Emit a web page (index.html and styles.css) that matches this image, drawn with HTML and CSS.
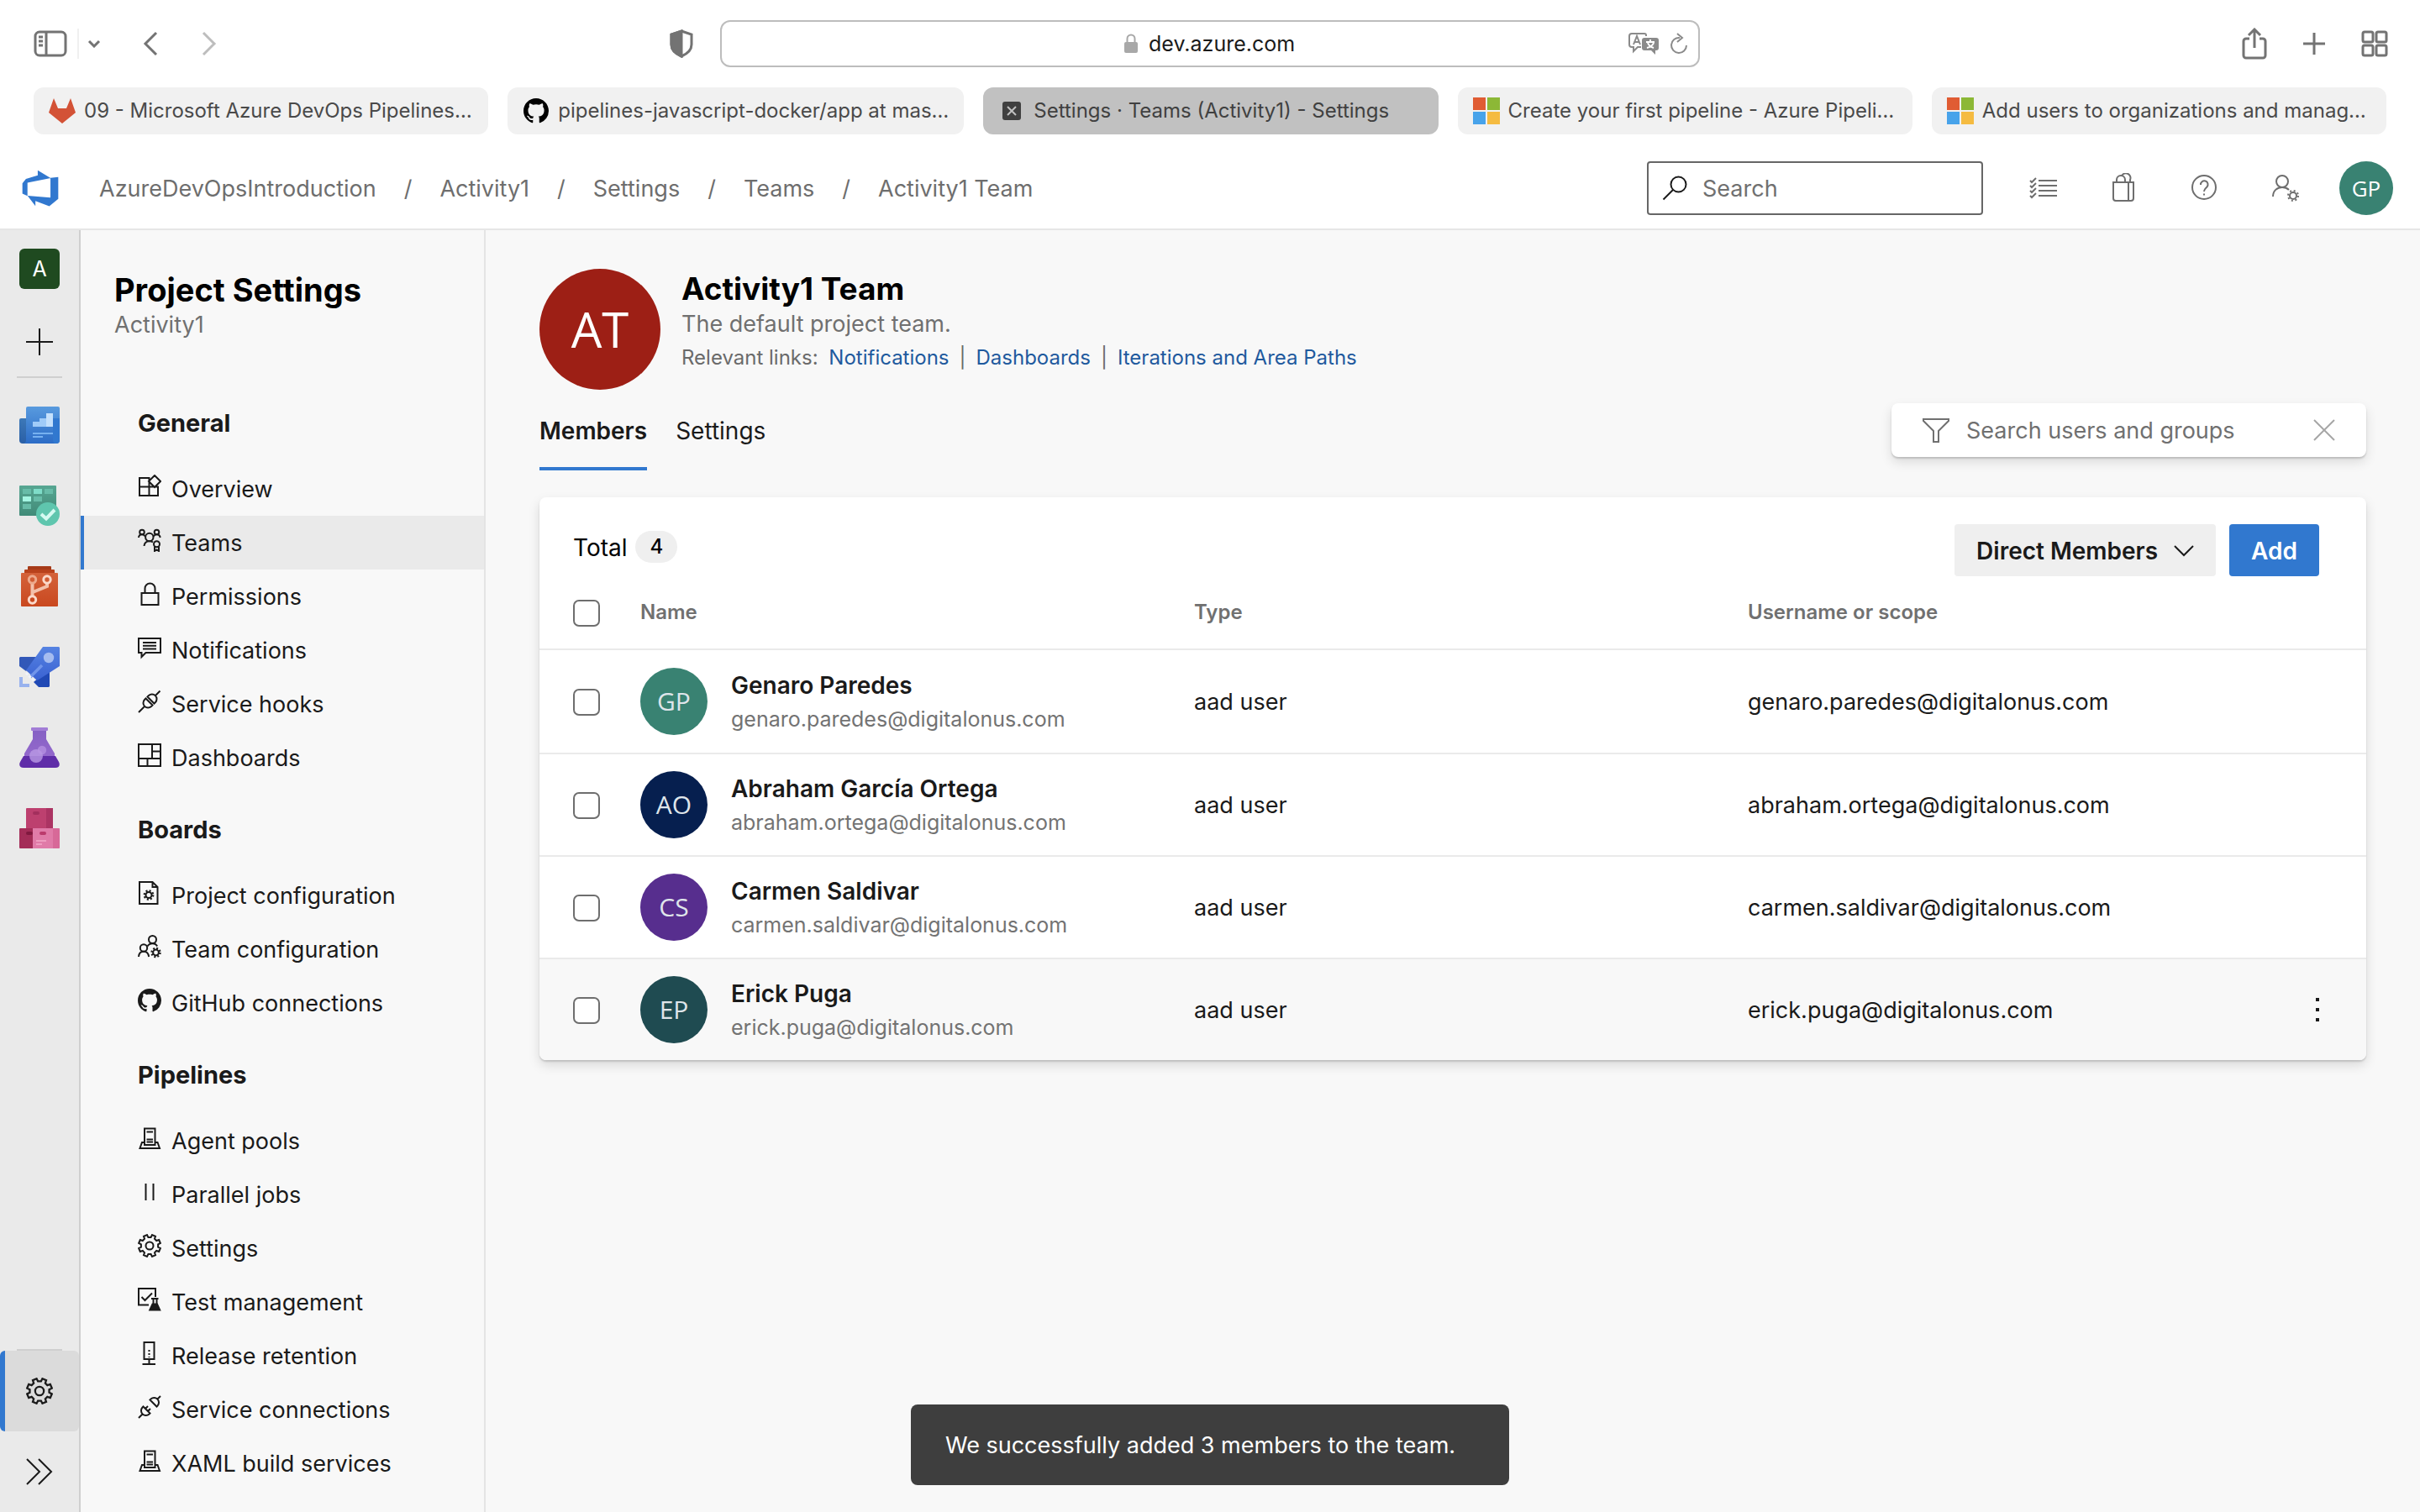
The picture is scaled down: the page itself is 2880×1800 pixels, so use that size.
FILE: index.html
```html
<!DOCTYPE html>
<html lang="en">
<head>
<meta charset="utf-8">
<meta name="viewport" content="width=device-width, initial-scale=1">
<title>Settings · Teams (Activity1) - Settings</title>
<link rel="stylesheet" href="styles.css">
</head>
<body>
<svg class="sprite" aria-hidden="true">
  <symbol id="i-overview" viewBox="0 0 28 28"><path d="M2 4h11.500v21H2zM2 14.500h22V25H13.500M24 14.500V25M20 1l7 7-7 7-7-7z"/></symbol>
  <symbol id="i-teams" viewBox="0 0 28 28"><circle cx="5" cy="4.500" r="2.800"/><circle cx="22.500" cy="4.500" r="2.800"/><circle cx="13.800" cy="10.500" r="4.700"/><path d="M1 11c.2-2.600 2-3.800 4-3.800 1.700 0 3 .8 3.800 2.200M18.700 9.400c.8-1.400 2.100-2.200 3.800-2.200 2 0 3.800 1.200 4.200 3.800M7.500 21c.4-3.700 3-5.800 6.300-5.800 1.800 0 3.200.5 4.200 1.400"/><circle cx="22.500" cy="18.800" r="3.500"/><path d="M20 21.500V27l2.500-1.600L25 27v-5.500"/></symbol>
  <symbol id="i-lock" viewBox="0 0 28 28"><path d="M4.500 13h20v14h-20zM8.500 13V7.500a6 6 0 0 1 12 0V13"/></symbol>
  <symbol id="i-comment" viewBox="0 0 28 28"><path d="M1 3h26v17H9.500L4.500 25v-5H1zM6 8h16M6 11.700h16M6 15.500h16"/></symbol>
  <symbol id="i-plug" viewBox="0 0 28 28"><path d="M1 27l6.500-6.500M26.500 1.500L21 7M9.500 10.500l8 8-1.500 1.500a5.660 5.660 0 0 1-8-8zM11.500 8.500l8 8 1.500-1.500a5.660 5.660 0 0 0-8-8z"/></symbol>
  <symbol id="i-dashboards" viewBox="0 0 28 28"><path d="M1 1h26v26H1zM1 18h26M17 1v17M17 9.500h10M11.500 18v9"/></symbol>
  <symbol id="i-doc-gear" viewBox="0 0 28 28"><path d="M2 1h15.500l6 6v20H2zM17.500 1v6h6"/><circle cx="13" cy="16.500" r="3.500"/><circle cx="13" cy="16.500" r="5.200" stroke-dasharray="2 2.080" stroke-width="2.400"/></symbol>
  <symbol id="i-team-gear" viewBox="0 0 28 28"><circle cx="17.500" cy="5.500" r="4.500"/><circle cx="7" cy="15.500" r="4.200"/><path d="M1 26c.3-4 2.800-6.300 6-6.300s5.600 2 6.200 6.300M11.500 13.500c1.200-2.200 3.500-3.300 6-3.300 2.400 0 4.600 1.100 5.600 3.300"/><circle cx="21.500" cy="21" r="3.400"/><circle cx="21.500" cy="21" r="5" stroke-dasharray="1.930 2" stroke-width="2.400"/></symbol>
  <symbol id="i-github" viewBox="0 0 16 16"><path fill="currentColor" stroke="none" d="M8 0C3.580 0 0 3.580 0 8c0 3.540 2.290 6.530 5.470 7.590.4.070.55-.17.55-.38 0-.19-.01-.82-.01-1.490-2.010.37-2.530-.49-2.690-.94-.09-.23-.48-.94-.82-1.130-.28-.15-.68-.52-.01-.53.63-.01 1.080.58 1.230.82.72 1.210 1.870.87 2.330.66.070-.52.28-.87.51-1.070-1.780-.2-3.640-.89-3.640-3.950 0-.87.31-1.590.82-2.150-.08-.2-.36-1.020.08-2.120 0 0 .67-.21 2.200.82.64-.18 1.320-.27 2-.27.68 0 1.360.09 2 .27 1.530-1.040 2.200-.82 2.200-.82.44 1.100.16 1.920.08 2.120.51.56.82 1.270.82 2.150 0 3.070-1.870 3.750-3.650 3.950.29.25.54.73.54 1.480 0 1.070-.01 1.930-.01 2.200 0 .21.15.46.55.38A8.013 8.013 0 0 0 16 8c0-4.420-3.580-8-8-8z"/></symbol>
  <symbol id="i-server" viewBox="0 0 28 28"><path d="M8 22V2.500h12.500V22zM10.500 6.500h7.500M10.500 15.500h7.500M10.500 18.500h7.500M8 19H5L2.500 26h23.500L23.500 19h-3M8 22h12.500"/></symbol>
  <symbol id="i-parallel" viewBox="0 0 28 28"><path d="M9.500 4v20M18.500 4v20"/></symbol>
  <symbol id="i-gear" viewBox="0 0 28 28"><path d="M24.100 15.600L26.900 17 25.200 21 22.200 20 20 22.200 21 25.200 17 26.900 15.600 24.100H12.400L11 26.900 7 25.200 8 22.200 5.800 20 2.800 21 1.100 17 3.900 15.600V12.400L1.100 11 2.800 7 5.800 8 8 5.800 7 2.800 11 1.100 12.400 3.900H15.600L17 1.100 21 2.800 20 5.800 22.200 8 25.200 7 26.900 11 24.100 12.400z"/><circle cx="14" cy="14" r="4.500"/></symbol>
  <symbol id="i-test" viewBox="0 0 28 28"><path d="M13 20.500H1V1h20v10M4.500 11l4 4L17 6.500M16 13h8.500M18.500 13v6M22.500 13v6"/><path fill="currentColor" d="M17.500 19.500h5.500l3.200 7H14.300z"/></symbol>
  <symbol id="i-retention" viewBox="0 0 28 28"><path d="M7.500 1h12v20h-12zM13.500 21v5.500M5.500 27h15.500"/><path stroke-dasharray="2 2" d="M13.500 10v9"/></symbol>
  <symbol id="i-connect" viewBox="0 0 28 28"><path d="M1 27l4.500-4.500M27 1l-3.500 3.500M6.500 13.500l8 8-1 1a5.660 5.660 0 0 1-8-8zM9 16l3-3M12 19l3-3M14.500 5.500l8 8 1-1a5.660 5.660 0 0 0-8-8z"/></symbol>
  <symbol id="i-search" viewBox="0 0 30 30"><circle cx="19.500" cy="10.500" r="9"/><path d="M13 17L1.500 28.500"/></symbol>
  <symbol id="i-chevron" viewBox="0 0 24 24"><path d="M1 6l11 11L23 6"/></symbol>
  <symbol id="i-ms" viewBox="0 0 32 32"><path fill="#e05c33" stroke="none" d="M0 0h15v15H0z"/><path fill="#8cb836" stroke="none" d="M17 0h15v15H17z"/><path fill="#48a3ea" stroke="none" d="M0 17h15v15H0z"/><path fill="#f5bb41" stroke="none" d="M17 17h15v15H17z"/></symbol>
</svg>

<header class="browser">
  <div class="toolbar">
    <div class="toolbar-left">
      <button class="tool" aria-label="Show sidebar"><svg width="40" height="32" viewBox="0 0 40 32"><rect x="2" y="2" width="36" height="28" rx="5"/><path d="M15 2v28M6 8h5M6 13h5M6 18h5"/></svg></button>
      <button class="tool tool-menu" aria-label="Sidebar menu"><svg width="16" height="10" viewBox="0 0 16 10"><path d="M2 2l6 6 6-6"/></svg></button>
      <button class="tool tool-back" aria-label="Back"><svg width="18" height="30" viewBox="0 0 18 30"><path d="M16 2L3 15l13 13"/></svg></button>
      <button class="tool tool-forward" aria-label="Forward"><svg width="18" height="30" viewBox="0 0 18 30"><path d="M2 2l13 13L2 28"/></svg></button>
      <button class="tool tool-shield" aria-label="Privacy report"><svg width="28" height="34" viewBox="0 0 28 34"><path d="M14 2l12 4v12c0 7-5 11-12 14C7 29 2 25 2 18V6z"/><path fill="currentColor" d="M14 2v30C7 29 2 25 2 18V6z"/></svg></button>
    </div>
    <div class="address">
      <label class="address-field">
        <svg width="18" height="24" viewBox="0 0 18 24"><rect x="1" y="10" width="16" height="13" rx="2" fill="#a8a8a8" stroke="none"/><path stroke="#a8a8a8" stroke-width="2" d="M4.500 10V6a4.500 4.500 0 0 1 9 0v4"/></svg>
        <input class="address-input" aria-label="Address" value="dev.azure.com">
      </label>
      <div class="address-tools">
        <button class="tool" aria-label="Translate"><svg width="38" height="28" viewBox="0 0 38 28"><path stroke-width="2" d="M20 2H5a3 3 0 0 0-3 3v10a3 3 0 0 0 3 3h2v5l5-5h4M7 15l4-10 4 10M8.500 12h5M22 5V4a2 2 0 0 0-2-2"/><path fill="currentColor" stroke="none" d="M20 7h14a3 3 0 0 1 3 3v9a3 3 0 0 1-3 3h-1v5l-5-5h-8a3 3 0 0 1-3-3v-9a3 3 0 0 1 3-3z"/><path stroke="#fff" stroke-width="2" d="M22 12h10M27 9v3M24 13c1 3 4 5 7 6M31 13c-1 3-4 5-8 6"/></svg></button>
        <button class="tool" aria-label="Reload"><svg width="22" height="26" viewBox="0 0 22 26"><path stroke-width="2" d="M12 6a9 9 0 1 0 8 9M9 1l6 5-6 5"/></svg></button>
      </div>
    </div>
    <div class="toolbar-right">
      <button class="tool" aria-label="Share"><svg width="30" height="38" viewBox="0 0 30 38"><path d="M9 13H5a3 3 0 0 0-3 3v17a3 3 0 0 0 3 3h20a3 3 0 0 0 3-3V16a3 3 0 0 0-3-3h-4M15 24V2M8 9l7-7 7 7"/></svg></button>
      <button class="tool" aria-label="New tab"><svg width="28" height="28" viewBox="0 0 28 28"><path d="M14 1v26M1 14h26"/></svg></button>
      <button class="tool" aria-label="Tab overview"><svg width="32" height="32" viewBox="0 0 32 32"><rect x="2" y="2" width="12" height="12" rx="2"/><rect x="18" y="2" width="12" height="12" rx="2"/><rect x="2" y="18" width="12" height="12" rx="2"/><rect x="18" y="18" width="12" height="12" rx="2"/></svg></button>
    </div>
  </div>
  <nav class="tabs" aria-label="Open tabs">
    <a class="tab" href="#"><svg width="32" height="30" viewBox="0 0 32 30"><path fill="#d35236" stroke="none" d="M16 30L0 17 6 0l5 12h10l5-12 6 17z"/></svg><span>09 - Microsoft Azure DevOps Pipelines…</span></a>
    <a class="tab" href="#"><svg class="black" width="32" height="30"><use href="#i-github"/></svg><span>pipelines-javascript-docker/app at mas…</span></a>
    <a class="tab tab-active" href="#" aria-current="page"><svg width="32" height="22" viewBox="0 0 32 22"><rect x="5" width="22" height="22" rx="3" fill="#404040" stroke="none"/><path stroke="#c1c1c1" stroke-width="2" d="M11 6l10 10M21 6L11 16"/></svg><span>Settings · Teams (Activity1) - Settings</span></a>
    <a class="tab" href="#"><svg width="32" height="32"><use href="#i-ms"/></svg><span>Create your first pipeline - Azure Pipeli…</span></a>
    <a class="tab" href="#"><svg width="32" height="32"><use href="#i-ms"/></svg><span>Add users to organizations and manag…</span></a>
  </nav>
</header>

<div class="topbar">
  <a class="logo" href="#" aria-label="Azure DevOps"><svg width="48" height="48" viewBox="0 0 18 18"><path fill="#3178cf" d="M17 4v9.740l-4 3.280-6.200-2.260V17l-3.510-4.590 10.230.8V4.440zm-3.410.49L7.850 1v2.290L2.580 4.840 1 6.870v4.610l2.260 1V6.570z"/></svg></a>
  <nav class="crumbs" aria-label="Breadcrumb">
    <a href="#">AzureDevOpsIntroduction</a><span class="slash">/</span><a href="#">Activity1</a><span class="slash">/</span><a href="#">Settings</a><span class="slash">/</span><a href="#">Teams</a><span class="slash">/</span><a href="#">Activity1 Team</a>
  </nav>
  <label class="search"><svg width="30" height="30"><use href="#i-search"/></svg><input type="search" placeholder="Search" aria-label="Search"></label>
  <div class="top-actions">
    <button class="top-btn" aria-label="Work items"><svg width="36" height="36" viewBox="0 0 36 36"><path stroke-width="2" d="M12 9h22M12 15h22M12 21h22M12 27h22M2 9l2 2 5-5M2 15l2 2 5-5M2 21l2 2 5-5M2 27l2 2 5-5"/></svg></button>
    <button class="top-btn" aria-label="Marketplace"><svg width="36" height="36" viewBox="0 0 36 36"><path stroke-width="2" d="M5 11h24v19a3 3 0 0 1-3 3H8a3 3 0 0 1-3-3zM23 11v22M9 11V8a5 5 0 0 1 10 0v3M15 3.500a5 5 0 0 1 10 4.500v3"/></svg></button>
    <button class="top-btn" aria-label="Help"><svg width="36" height="36" viewBox="0 0 36 36"><circle cx="17" cy="17" r="14" stroke-width="2"/><path stroke-width="2" d="M13 14a4.300 4.300 0 1 1 7.500 2.500C18.500 18.500 17 19 17 22M17 24.500v2"/></svg></button>
    <button class="top-btn" aria-label="User settings"><svg width="36" height="36" viewBox="0 0 36 36"><circle cx="14" cy="10" r="7" stroke-width="2"/><path stroke-width="2" d="M3 28c0-7 5-11 11-11 3 0 6 1 8 3"/><circle cx="27" cy="27" r="4" stroke-width="2"/><circle cx="27" cy="27" r="6" stroke-width="2" stroke-dasharray="2 2.710"/></svg></button>
  </div>
  <button class="avatar avatar-me" aria-label="Account">GP</button>
</div>

<div class="app">
  <nav class="rail" aria-label="Project">
    <a class="rail-item rail-project" href="#"><span class="project-tile">A</span></a>
    <button class="rail-item rail-add" aria-label="New"><svg width="32" height="32" viewBox="0 0 32 32"><path d="M16 0v32M0 16h32"/></svg></button>
    <hr class="rail-line">
    <a class="rail-item" href="#" aria-label="Overview"><svg width="48" height="48" viewBox="0 0 48 48">
      <defs><linearGradient id="g1" x1="0" y1="0" x2="0" y2="1"><stop offset="0" stop-color="#589ade"/><stop offset="1" stop-color="#2c6cc6"/></linearGradient><linearGradient id="g2" x1="0" y1="0" x2="0" y2="1"><stop offset="0" stop-color="#3c78b8"/><stop offset="1" stop-color="#2a5fa6"/></linearGradient></defs>
      <path fill="url(#g2)" d="M2 16h8v30H4a4 4 0 0 1-4-4V18a2 2 0 0 1 2-2z"/><path fill="url(#g1)" d="M10 2h36a2 2 0 0 1 2 2v38a4 4 0 0 1-4 4H4c3 0 4-2 4-4V4a2 2 0 0 1 2-2z"/><path fill="#3178cf" d="M40 16h8v26c0 3-2 4-4 4s-4-1-4-4z"/><path fill="#a0cbf8" d="M16 20h8v-4h8v10H16z"/><path fill="#c4e0fc" d="M32 10h8v16h-8z"/><path fill="#76b1f0" d="M16 33h24v2H16zM16 37h12v2H16z"/></svg></a>
    <a class="rail-item" href="#" aria-label="Boards"><svg width="48" height="48" viewBox="0 0 48 48">
      <defs><linearGradient id="g3" x1="0" y1="0" x2="0" y2="1"><stop offset="0" stop-color="#57a692"/><stop offset="1" stop-color="#418b78"/></linearGradient></defs>
      <rect width="44" height="36" rx="1" fill="url(#g3)"/><path fill="#68bca8" d="M4 4h10v6H4zM30 4h10v6H30zM17 13h10v6H17zM4 22h10v6H4z"/><path fill="#7fdcc8" d="M17 4h10v6H17z"/><path fill="#a5f5e2" d="M4 13h10v6H4z"/><circle cx="34" cy="34" r="14" fill="#5fc6ae"/><path stroke="#d5faf1" stroke-width="4" d="M26 34l6 5.500L42 29"/></svg></a>
    <a class="rail-item" href="#" aria-label="Repos"><svg width="48" height="48" viewBox="0 0 48 48">
      <defs><linearGradient id="g4" x1="0" y1="0" x2="0" y2="1"><stop offset="0" stop-color="#d4623a"/><stop offset="1" stop-color="#c9481f"/></linearGradient></defs>
      <rect x="10" width="28" height="6" rx="1" fill="#a63a18"/><rect x="6" y="4" width="36" height="8" rx="1" fill="#b8421c"/><rect x="2" y="8" width="44" height="40" rx="1" fill="url(#g4)"/><path stroke="#f3c0aa" stroke-width="4" d="M15.500 20v16M33 20v4l-17 7"/><circle cx="15.500" cy="16" r="4.200" stroke="#eda98c"/><circle cx="33" cy="16" r="4.200" stroke="#fbd9ca"/><circle class="ring-filled" cx="15.500" cy="40" r="4.200"/></svg></a>
    <a class="rail-item" href="#" aria-label="Pipelines"><svg width="48" height="48" viewBox="0 0 48 48">
      <defs><linearGradient id="g5" x1="0" y1="0" x2="0" y2="1"><stop offset="0" stop-color="#5683e2"/><stop offset="1" stop-color="#3a62d2"/></linearGradient></defs>
      <path fill="#3258b8" d="M1 12h22L8 29l-8-6V13z"/><path fill="#2049b5" d="M36 26v21l-1 1H23l-6-6z"/><path fill="url(#g5)" d="M28 0h19l1 1v22L23 39l-2 1L8 28z"/><circle cx="35" cy="13" r="6.200" fill="#a5bcf0"/><path stroke="#7195ea" stroke-width="3.500" d="M13 36l14-14"/><path fill="#98b2ee" d="M0 36h4v8h8v4H0z"/><path stroke="#f0f3fa" stroke-width="3" stroke-dasharray="3 2" d="M8 31l10 10"/></svg></a>
    <a class="rail-item" href="#" aria-label="Test Plans"><svg width="48" height="48" viewBox="0 0 48 48">
      <defs><linearGradient id="g6" x1="0" y1="0" x2="0" y2="1"><stop offset="0" stop-color="#8661c4"/><stop offset="1" stop-color="#9368cc"/></linearGradient></defs>
      <path fill="url(#g6)" d="M16 3h16v11l10 17v3H6v-3l10-17z"/><rect x="14" width="20" height="4" rx="1" fill="#a27dd6"/><path fill="#5f2da8" d="M5 34h38l4 7c2 4 0 7-4 7H5c-4 0-6-3-4-7z"/><circle cx="20" cy="34" r="8" fill="#b99ae4" fill-opacity=".8"/><circle cx="27" cy="27" r="5.200" fill="#b996e4" fill-opacity=".7"/></svg></a>
    <a class="rail-item" href="#" aria-label="Artifacts"><svg width="48" height="48" viewBox="0 0 48 48">
      <rect x="8" width="32" height="25" rx="1" fill="#bd406f"/><path fill="#ab3463" d="M32 0h8v24h-8z"/><rect x="16" y="4" width="8" height="4" rx="2" fill="#a32f5d"/><rect y="24" width="17" height="24" rx="1" fill="#a42d58"/><path fill="#e07ba8" d="M16 24h16v24H16z"/><rect x="16" y="24" width="32" height="24" rx="1" fill="#e07ba8"/><path fill="#d76998" d="M32 24h15l1 1v22l-1 1h-7V24z"/><path fill="#e07ba8" d="M30 24h10v24H30z"/><rect x="8" y="28" width="8" height="4" rx="2" fill="#80193f"/><rect x="24" y="28" width="8" height="4" rx="2" fill="#bb3a6c"/><path fill="#ee9dc0" d="M20 38h12v2H20zM20 42h7v2h-7z"/></svg></a>
    <div class="rail-bottom">
      <hr class="rail-line">
      <a class="rail-item rail-selected" href="#" aria-label="Project settings" aria-current="page"><svg width="32" height="32"><use href="#i-gear"/></svg></a>
      <button class="rail-item" aria-label="Expand navigation"><svg width="32" height="32" viewBox="0 0 32 32"><path d="M1 1l15 15L1 31M15 1l15 15-15 15"/></svg></button>
    </div>
  </nav>

  <aside class="sidebar">
    <div class="sidebar-head">
      <h1>Project Settings</h1>
      <p>Activity1</p>
    </div>
    <section>
      <h2>General</h2>
      <a class="nav-link" href="#"><svg><use href="#i-overview"/></svg>Overview</a>
      <a class="nav-link nav-selected" href="#" aria-current="page"><svg><use href="#i-teams"/></svg>Teams</a>
      <a class="nav-link" href="#"><svg><use href="#i-lock"/></svg>Permissions</a>
      <a class="nav-link" href="#"><svg><use href="#i-comment"/></svg>Notifications</a>
      <a class="nav-link" href="#"><svg><use href="#i-plug"/></svg>Service hooks</a>
      <a class="nav-link" href="#"><svg><use href="#i-dashboards"/></svg>Dashboards</a>
    </section>
    <section>
      <h2>Boards</h2>
      <a class="nav-link" href="#"><svg><use href="#i-doc-gear"/></svg>Project configuration</a>
      <a class="nav-link" href="#"><svg><use href="#i-team-gear"/></svg>Team configuration</a>
      <a class="nav-link" href="#"><svg><use href="#i-github"/></svg>GitHub connections</a>
    </section>
    <section>
      <h2>Pipelines</h2>
      <a class="nav-link" href="#"><svg><use href="#i-server"/></svg>Agent pools</a>
      <a class="nav-link" href="#"><svg><use href="#i-parallel"/></svg>Parallel jobs</a>
      <a class="nav-link" href="#"><svg><use href="#i-gear"/></svg>Settings</a>
      <a class="nav-link" href="#"><svg><use href="#i-test"/></svg>Test management</a>
      <a class="nav-link" href="#"><svg><use href="#i-retention"/></svg>Release retention</a>
      <a class="nav-link" href="#"><svg><use href="#i-connect"/></svg>Service connections</a>
      <a class="nav-link" href="#"><svg><use href="#i-server"/></svg>XAML build services</a>
    </section>
  </aside>

  <main class="main">
    <header class="team-head">
      <div class="avatar avatar-team">AT</div>
      <div>
        <h2>Activity1 Team</h2>
        <p class="team-desc">The default project team.</p>
        <p class="team-links">Relevant links: <a href="#">Notifications</a><span>|</span><a href="#">Dashboards</a><span>|</span><a href="#">Iterations and Area Paths</a></p>
      </div>
    </header>
    <div class="pivot-row">
      <div class="pivots" role="tablist">
        <button class="pivot pivot-active" role="tab" aria-selected="true">Members</button>
        <button class="pivot" role="tab" aria-selected="false">Settings</button>
      </div>
      <div class="filter">
        <svg width="32" height="32" viewBox="0 0 32 32"><path d="M1 3h30v2L19 17v13h-6V17L1 5z"/></svg>
        <input placeholder="Search users and groups" aria-label="Search users and groups">
        <button aria-label="Clear"><svg width="26" height="26" viewBox="0 0 26 26"><path d="M1 1l24 24M25 1L1 25"/></svg></button>
      </div>
    </div>
    <section class="card">
      <div class="card-head">
        <div class="total">Total <span class="badge">4</span></div>
        <div class="scope">
          <select aria-label="Membership scope"><option>Direct Members</option><option>Expanded Members</option></select>
          <svg width="24" height="24"><use href="#i-chevron"/></svg>
        </div>
        <button class="add">Add</button>
      </div>
      <table class="members">
        <colgroup><col class="col-check"><col><col><col><col class="col-more"></colgroup>
        <thead>
          <tr><th><input type="checkbox" aria-label="Select all"></th><th>Name</th><th>Type</th><th>Username or scope</th><th></th></tr>
        </thead>
        <tbody>
          <tr><td><input type="checkbox" aria-label="Select Genaro Paredes"></td><td><div class="person"><span class="avatar av-green">GP</span><div><b>Genaro Paredes</b><small>genaro.paredes@digitalonus.com</small></div></div></td><td>aad user</td><td>genaro.paredes@digitalonus.com</td><td></td></tr>
          <tr><td><input type="checkbox" aria-label="Select Abraham García Ortega"></td><td><div class="person"><span class="avatar av-navy">AO</span><div><b>Abraham García Ortega</b><small>abraham.ortega@digitalonus.com</small></div></div></td><td>aad user</td><td>abraham.ortega@digitalonus.com</td><td></td></tr>
          <tr><td><input type="checkbox" aria-label="Select Carmen Saldivar"></td><td><div class="person"><span class="avatar av-purple">CS</span><div><b>Carmen Saldivar</b><small>carmen.saldivar@digitalonus.com</small></div></div></td><td>aad user</td><td>carmen.saldivar@digitalonus.com</td><td></td></tr>
          <tr class="row-hover"><td><input type="checkbox" aria-label="Select Erick Puga"></td><td><div class="person"><span class="avatar av-teal">EP</span><div><b>Erick Puga</b><small>erick.puga@digitalonus.com</small></div></div></td><td>aad user</td><td>erick.puga@digitalonus.com</td><td><button class="more" aria-label="More options"><svg width="32" height="32" viewBox="0 0 32 32"><path fill="currentColor" stroke="none" d="M14 2h4v4h-4zM14 14h4v4h-4zM14 26h4v4h-4z"/></svg></button></td></tr>
        </tbody>
      </table>
    </section>
  </main>
</div>

<div class="toast" role="status">We successfully added 3 members to the team.</div>
</body>
</html>
```
FILE: styles.css
```css
* { box-sizing: border-box; }

body {
  margin: 0;
  min-height: 100vh;
  display: flex;
  flex-direction: column;
  background: #f8f8f8;
  color: #1a1a1a;
  font: 27px/40px Inter, "Liberation Sans", sans-serif;
}

h1, h2, p, hr { margin: 0; }
a { color: inherit; text-decoration: none; }
svg { display: block; flex: none; fill: none; stroke: currentColor; stroke-width: 2; }
.rail svg path[fill], .rail svg rect, .rail svg circle[fill], .logo svg path { stroke: none; }
.rail svg circle[stroke] { stroke-width: 3; }
.rail .ring-filled { fill: #c9481f; stroke: #fbd9ca; stroke-width: 3; }
.sprite { position: absolute; width: 0; height: 0; }

button, input, select {
  margin: 0;
  padding: 0;
  border: 0;
  background: none;
  color: inherit;
  font: inherit;
  appearance: none;
}
input { min-width: 0; outline: 0; }

/* Browser chrome */
.browser { background: #fff; padding-bottom: 16px; }
.toolbar {
  display: grid;
  grid-template-columns: 1fr 40.5% 1fr;
  align-items: center;
  height: 104px;
  color: #737373;
}
.tool { display: flex; align-items: center; flex: none; }
.tool svg { stroke-width: 3; }
.toolbar-left { display: flex; align-items: center; padding: 0 32px 0 40px; }
.tool-menu { height: 36px; margin-left: 12px; padding-left: 10px; border-left: 2px solid #f0f0f0; }
.tool-back { margin-left: 50px; }
.tool-forward { margin-left: 52px; color: #bdbdbd; }
.tool-shield { margin-left: auto; }
.address {
  display: grid;
  grid-template-columns: 1fr auto 1fr;
  align-items: center;
  height: 56px;
  padding: 0 12px;
  border: 2px solid #bdbdbd;
  border-radius: 12px;
}
.address-field { grid-column: 2; display: flex; align-items: center; gap: 12px; color: #1a1a1a; font-size: 25px; }
.address-input { width: 176px; }
.address-tools { display: flex; align-items: center; justify-content: flex-end; gap: 12px; color: #8a8a8a; }
.toolbar-right { display: flex; align-items: center; justify-content: flex-end; gap: 42px; padding-right: 38px; }

.tabs { display: grid; grid-template-columns: repeat(5, 1fr); gap: 23px; padding: 0 40px; }
.tab {
  display: flex;
  align-items: center;
  gap: 10px;
  height: 56px;
  padding: 0 18px;
  border-radius: 12px;
  background: #f1f1f1;
  color: #4a4a4a;
  font-size: 24px;
}
.tab span { overflow: hidden; white-space: nowrap; }
.tab-active { background: #c1c1c1; color: #404040; }
.black { color: #000; }

/* Azure DevOps header */
.topbar {
  display: flex;
  align-items: center;
  height: 98px;
  padding: 0 32px 0 24px;
  border-bottom: 2px solid #e6e6e6;
  background: #fff;
  color: #6e6e6e;
}
.logo { margin-right: 46px; }
.crumbs { display: flex; gap: 33px; margin-right: auto; padding-top: 2px; white-space: nowrap; }
.search {
  display: flex;
  align-items: center;
  gap: 18px;
  width: 400px;
  height: 64px;
  padding: 0 16px;
  border: 2px solid #666;
  border-radius: 4px;
  color: #1a1a1a;
}
.search input, .filter input { flex: 1; padding-top: 2px; }
input::placeholder { color: #707070; opacity: 1; }
.top-actions { display: flex; gap: 60px; margin: 0 46px 0 54px; }

.avatar {
  display: flex;
  align-items: center;
  justify-content: center;
  flex: none;
  width: 80px;
  height: 80px;
  border-radius: 50%;
  color: #dfe5ea;
  font: 30px/40px "Open Sans", "Noto Sans", sans-serif;
}
.avatar-me { width: 64px; height: 64px; background: #398272; color: #fff; font-size: 26px; }
.avatar-team { width: 144px; height: 144px; background: #9d1f15; color: #fff; font-size: 58px; }
.av-green { background: #398272; }
.av-navy { background: #061f4f; }
.av-purple { background: #572e8e; }
.av-teal { background: #1f4b51; }

.app { flex: 1; display: grid; grid-template-columns: 96px 482px 1fr; }

/* Icon rail */
.rail { display: flex; flex-direction: column; background: #eaeaea; border-right: 2px solid #cfcfcf; }
.rail-item { display: flex; align-items: center; justify-content: center; width: 100%; height: 96px; }
.rail-project { height: 92px; }
.rail-add { height: 82px; }
.project-tile {
  width: 48px;
  height: 48px;
  border-radius: 6px;
  background: #1f4a20;
  color: #fff;
  font-size: 25px;
  line-height: 48px;
  text-align: center;
}
.rail-line { flex: none; width: 54px; height: 2px; margin: 0 auto; border: 0; background: #cfcfcf; }
.rail-line + .rail-item { margin-top: 8px; }
.rail-bottom { margin-top: auto; }
.rail-bottom .rail-item { margin-top: 0; }
.rail-selected { border-left: 6px solid #3178cf; border-radius: 6px; padding-right: 6px; background: #dbdbdb; }

/* Project settings navigation */
.sidebar { padding: 47px 0 26px; border-right: 2px solid #e4e4e4; }
.sidebar-head { padding-left: 40px; margin-bottom: 45px; }
.sidebar-head p { line-height: 36px; color: #707070; }
.sidebar h1, .team-head h2 { color: #000; font-size: 38px; font-weight: 700; line-height: 48px; }
.sidebar h2 { height: 100px; padding: 34px 0 0 68px; font-size: 29px; font-weight: 700; line-height: 40px; }
.nav-link { display: flex; align-items: center; gap: 12px; height: 64px; padding: 2px 0 0 68px; }
.nav-link svg { width: 28px; height: 28px; margin-bottom: 8px; }
.nav-selected { padding-left: 64px; border-left: 4px solid #3178cf; background: #eaeaea; }

/* Team page */
.main { padding: 46px 64px 0; }
.team-head { display: flex; gap: 25px; }
.team-head h2 { font-size: 37px; }
.team-desc { line-height: 36px; color: #707070; }
.team-links { padding-top: 2px; color: #6a6a6a; font-size: 24px; }
.team-links a { color: #1f5a9e; }
.team-links a:first-child { margin-left: 6px; }
.team-links span { margin: 0 12px; }
.pivot-row { display: flex; justify-content: space-between; align-items: center; height: 96px; }
.pivots { display: flex; gap: 34px; align-self: stretch; }
.pivot { padding-top: 6px; border-bottom: 4px solid transparent; font-size: 28px; }
.pivot-active { border-color: #3178cf; font-weight: 600; }
.filter {
  display: flex;
  align-items: center;
  gap: 20px;
  width: 565px;
  height: 64px;
  padding: 0 37px;
  border-radius: 8px;
  background: #fff;
  box-shadow: 0 2px 2px rgba(0, 0, 0, .16), 0 6px 14px rgba(0, 0, 0, .12);
  color: #707070;
}
.filter button { color: #a6a6a6; }

.card {
  margin-top: 32px;
  overflow: hidden;
  border-radius: 8px;
  background: #fff;
  box-shadow: 0 2px 2px rgba(0, 0, 0, .14), 0 6px 14px rgba(0, 0, 0, .13);
}
.card-head { display: flex; gap: 16px; padding: 32px 56px 0 40px; }
.total { display: flex; gap: 10px; margin-right: auto; padding-top: 8px; color: #000; font-size: 28px; }
.badge { height: 38px; padding: 0 17px; border-radius: 19px; background: #efefef; font-size: 24px; font-weight: 500; line-height: 38px; }
.scope { position: relative; }
.scope select { width: 311px; height: 62px; padding: 2px 0 0 26px; border-radius: 4px; background: #efefef; font-size: 28px; font-weight: 600; }
.scope svg { position: absolute; right: 26px; top: 20px; pointer-events: none; }
.add { height: 62px; padding: 2px 26px 0; border-radius: 4px; background: #3178cf; color: #fff; font-size: 28px; font-weight: 600; }

.members { width: 100%; table-layout: fixed; border-collapse: separate; border-spacing: 0; }
.col-check { width: 120px; }
.col-more { width: 77px; }
.members th { height: 88px; padding: 0; border-bottom: 2px solid #eaeaea; color: #707070; font-size: 24px; font-weight: 600; text-align: left; }
.members td { height: 122px; padding: 0; }
.members tr + tr td { border-top: 2px solid #eaeaea; }
.members th:first-child, .members td:first-child { padding: 2px 0 0 40px; }
.members td:nth-child(3), .members td:nth-child(4) { padding-top: 2px; }
.members input { display: block; width: 32px; height: 32px; border: 2px solid #6e6e6e; border-radius: 7px; background: #fff; }
.row-hover { background: #f8f8f8; }
.person { display: flex; align-items: center; gap: 28px; }
.person b { display: block; padding-top: 1px; font-size: 28px; font-weight: 600; }
.person small { display: block; color: #737373; font-size: 25px; }
.more { display: flex; justify-content: center; width: 38px; }

.toast {
  position: fixed;
  right: 0;
  bottom: 32px;
  left: 0;
  width: fit-content;
  margin: 0 auto;
  padding: 29px 64px 27px 41px;
  border-radius: 8px;
  background: #3e3e3e;
  color: #fff;
}
```
